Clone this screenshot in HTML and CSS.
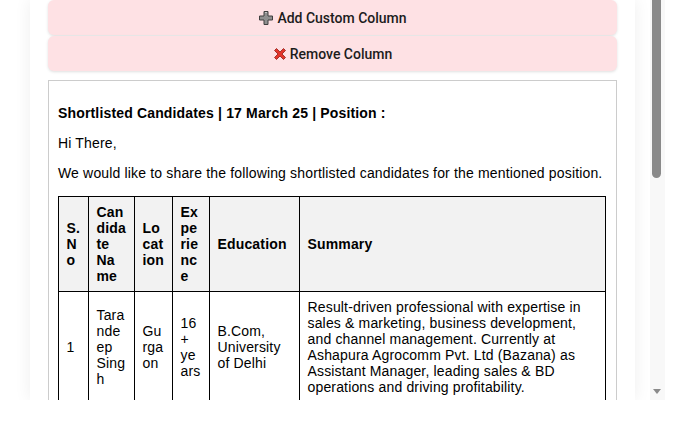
FILE: index.html
```html
<!DOCTYPE html>
<html>
  <head>
    <title>Shortlisted Candidates</title>
    <link rel="stylesheet" href="styles.css">
  </head>
  <body>
    <div class="viewer">
      <div class="viewer-content">
        <div class="panel">
          <div class="actions">
            <button class="action-btn">
              <svg class="icon" width="16" height="16" viewBox="0 0 16 16">
                <path d="M6 1.5h4v4.5h4.5v4h-4.5v4.5h-4v-4.5h-4.5v-4h4.5z" fill="#8f8f8f" stroke="#3f3f3f" stroke-width="1"/>
                <path d="M7 2.5h2" stroke="#c8c8c8" stroke-width="1"/>
              </svg>
              Add Custom Column
            </button>
            <button class="action-btn">
              <svg class="icon" width="14" height="14" viewBox="0 0 14 14">
                <path d="M1.5 3.5l2-2 3.5 3.5 3.5-3.5 2 2-3.5 3.5 3.5 3.5-2 2-3.5-3.5-3.5 3.5-2-2 3.5-3.5z" fill="#e3342a" stroke="#8e1d15" stroke-width="0.8"/>
              </svg>
              Remove Column
            </button>
          </div>

          <div class="mail">
            <p class="mail-title">Shortlisted Candidates | 17 March 25 | Position :</p>
            <p>Hi There,</p>
            <p>We would like to share the following shortlisted candidates for the mentioned position.</p>

            <table class="candidates">
              <colgroup>
                <col class="col-sno">
                <col class="col-name">
                <col class="col-loc">
                <col class="col-exp">
                <col class="col-edu">
                <col>
              </colgroup>
              <thead>
                <tr>
                  <th>S.No</th>
                  <th>Candidate Name</th>
                  <th>Location</th>
                  <th>Experience</th>
                  <th>Education</th>
                  <th>Summary</th>
                </tr>
              </thead>
              <tbody>
                <tr>
                  <td>1</td>
                  <td>Tarandeep Singh</td>
                  <td>Gurgaon</td>
                  <td>16+ years</td>
                  <td>B.Com, University of Delhi</td>
                  <td>Result-driven professional with expertise in sales &amp; marketing, business development, and channel management. Currently at Ashapura Agrocomm Pvt. Ltd (Bazana) as Assistant Manager, leading sales &amp; BD operations and driving profitability.</td>
                </tr>
              </tbody>
            </table>
          </div>
        </div>
      </div>

      <div class="scrollbar">
        <div class="scroll-thumb"></div>
        <div class="scroll-arrow"></div>
      </div>
    </div>
  </body>
</html>
```

FILE: styles.css
```css
body {
  margin: 0;
  background-color: #ffffff;
  font-family: "Liberation Sans", Arial, sans-serif;
  color: #000000;
}

.viewer {
  display: flex;
  width: 665px;
  height: 400px;
  background-color: #ffffff;
}

.viewer-content {
  flex: 1;
  overflow: hidden;
}

/* fake scrollbar, the real one is hidden in screenshots */
.scrollbar {
  width: 15px;
  flex: none;
  display: flex;
  flex-direction: column;
  justify-content: space-between;
  align-items: center;
  background-color: #f8f8f8;
  padding-bottom: 6px;
  box-sizing: border-box;
}

.scroll-thumb {
  width: 9px;
  height: 178px;
  margin-right: 2px;
  background-color: #8a8a8a;
  border-radius: 0 0 5px 5px;
}

.scroll-arrow {
  width: 0;
  height: 0;
  border-left: 4.5px solid transparent;
  border-right: 4.5px solid transparent;
  border-top: 5px solid #8a8a8a;
  margin-right: 2px;
}

.panel {
  width: 605px;
  height: 100%;
  margin-left: 30px;
  padding: 0 18px;
  box-sizing: border-box;
  background-color: #ffffff;
  box-shadow: 0 0 16px rgba(0, 0, 0, 0.07);
}

.actions {
  display: flex;
  flex-direction: column;
  gap: 1px;
}

.action-btn {
  display: flex;
  align-items: center;
  justify-content: center;
  gap: 3px;
  width: 100%;
  height: 35px;
  border: none;
  border-radius: 6px;
  background-color: #fee1e4;
  box-shadow: 0 1px 3px rgba(0, 0, 0, 0.13);
  font-family: Roboto, "Liberation Sans", sans-serif;
  font-weight: 500;
  font-size: 14px;
  color: #1c1c1c;
  padding: 1px 0 0;
}

.icon {
  flex: none;
}

.mail {
  margin-top: 9px;
  border: 1px solid #cccccc;
  padding: 10px 10px 10px 9px;
  font-size: 14px;
  letter-spacing: 0.16px;
}

.mail p {
  margin: 14px 0;
}

.mail-title {
  font-weight: bold;
}

.candidates {
  width: 100%;
  table-layout: fixed;
  border-collapse: collapse;
  margin: 15px 0 14px;
}

.col-sno { width: 30px; }
.col-name { width: 46px; }
.col-loc { width: 38px; }
.col-exp { width: 37px; }
.col-edu { width: 90px; }

.candidates th,
.candidates td {
  border: 1px solid #000000;
  padding: 7px 7.5px;
  text-align: left;
  vertical-align: middle;
  overflow-wrap: anywhere;
}

.candidates th {
  background-color: #f2f2f2;
  font-weight: bold;
}
```
